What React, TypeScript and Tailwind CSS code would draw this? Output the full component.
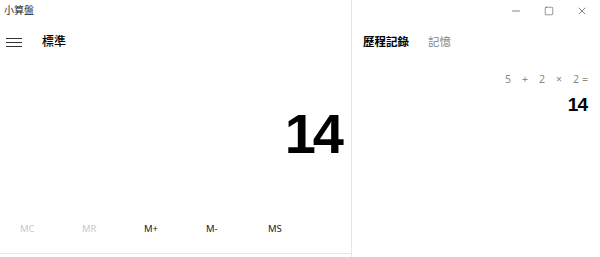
import { Minus, Square, X } from "lucide-react";

const memoryKeys = [
  { label: "MC", enabled: false },
  { label: "MR", enabled: false },
  { label: "M+", enabled: true },
  { label: "M-", enabled: true },
  { label: "MS", enabled: true },
];

const expression = ["5", "+", "2", "×", "2"];

export default function App() {
  return (
    <div className="flex h-[257px] w-[600px] overflow-hidden bg-white text-black font-['Noto_Sans','Noto_Sans_CJK_TC',sans-serif]">
      {/* Calculator panel */}
      <div className="flex w-[352px] flex-col border-r border-[#e6e6e6]">
        <div className="h-[22px] pl-[4px] pt-[3px] text-[10px] leading-[14px] text-[#222]">小算盤</div>

        <div className="flex h-[40px] items-center">
          <div className="ml-[6px] flex w-[16px] flex-col gap-[3px]">
            <span className="h-px bg-[#333]" />
            <span className="h-px bg-[#333]" />
            <span className="h-px bg-[#333]" />
          </div>
          <span className="ml-[20px] text-[12px] font-medium">標準</span>
        </div>

        <div className="flex h-[143px] justify-end pr-[10px] pt-[44px]">
          <span className="h-[56px] font-['Liberation_Sans',sans-serif] text-[56px] font-bold leading-none tracking-[-3px]">
            14
          </span>
        </div>

        <div className="flex h-[48px] items-center pl-[20px]">
          {memoryKeys.map((k) => (
            <span
              key={k.label}
              className={`w-[62px] text-[9.5px] ${k.enabled ? "text-[#222]" : "text-[#c8c8c8]"}`}
            >
              {k.label}
            </span>
          ))}
        </div>
        <div className="h-px bg-[#e6e6e6]" />
      </div>

      {/* History panel */}
      <div className="flex flex-1 flex-col">
        <div className="flex h-[22px] items-center justify-end gap-[22px] pr-[12px] text-[#333]">
          <Minus size={12} strokeWidth={1.2} />
          <Square size={10} strokeWidth={1.2} />
          <X size={12} strokeWidth={1.2} />
        </div>
        <div className="flex h-[40px] items-center pl-[11px] text-[11.5px]">
          <span className="font-bold">歷程記錄</span>
          <span className="ml-[19px] text-[#888]">記憶</span>
        </div>
        <div className="flex flex-col items-end pr-[12px] pt-[10px]">
          <div className="flex items-center text-[10.5px] leading-[14px] text-[#888]">
            {expression.map((c, i) => (
              <span key={i} className="w-[17px]">
                {c}
              </span>
            ))}
            <span className="-ml-[8px]">=</span>
          </div>
          <span className="mr-[1px] mt-[9px] font-['Liberation_Sans',sans-serif] text-[19px] font-bold leading-none tracking-[-1px]">
            14
          </span>
        </div>
      </div>
    </div>
  );
}
